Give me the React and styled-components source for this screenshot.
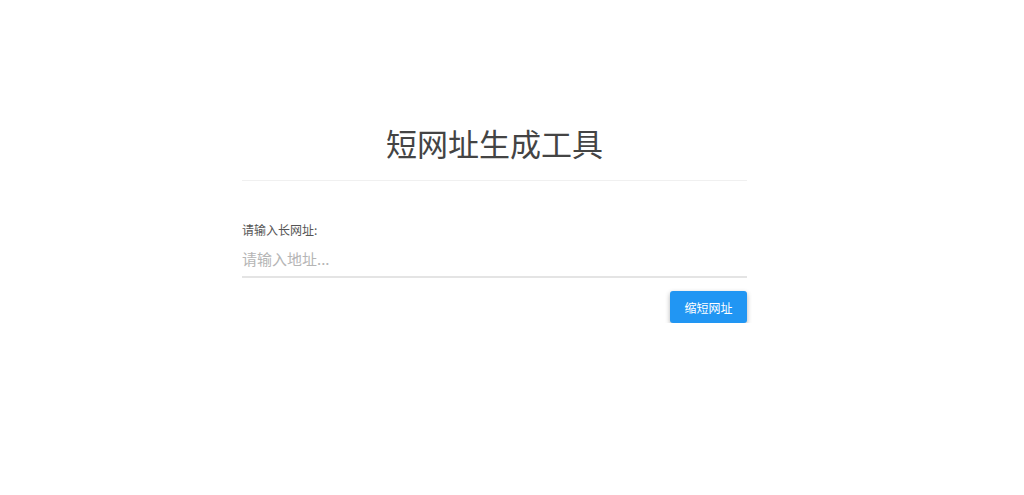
import React from "react";
import styled, { createGlobalStyle } from "styled-components";

const GlobalStyle = createGlobalStyle`
  body {
    margin: 0;
    background: #fff;
    font-family: "Noto Sans CJK SC", "Liberation Sans", sans-serif;
  }
`;

const Page = styled.div`
  padding: 118px 0 0 242px;
`;

const Container = styled.div`
  width: 505px;
`;

const Header = styled.header`
  border-bottom: 1px solid #f0f0f0;
  padding-bottom: 12px;
  margin-bottom: 40px;
`;

const Title = styled.h1`
  margin: 0;
  text-align: center;
  font-size: 31px;
  line-height: 50px;
  font-weight: 400;
  color: #444;
`;

const Form = styled.form`
  display: flex;
  flex-direction: column;
`;

const Label = styled.label`
  font-size: 12px;
  line-height: 18px;
  color: #555;
  margin-bottom: 7px;
`;

const Input = styled.input`
  border: none;
  border-bottom: 2px solid #e4e4e4;
  outline: none;
  padding: 0 0 6px;
  height: 24px;
  font-family: inherit;
  font-size: 15px;
  color: #333;
  &::placeholder {
    color: #b5b5b5;
  }
`;

const Actions = styled.div`
  display: flex;
  justify-content: flex-end;
  margin-top: 13px;
`;

const Button = styled.button`
  width: 77px;
  height: 32px;
  border: none;
  border-radius: 3px;
  background: #2196f3;
  color: #fff;
  font-family: inherit;
  font-size: 12px;
  cursor: pointer;
  box-shadow: 0 2px 5px rgba(0, 0, 0, 0.3);
`;

const App = () => {
  return (
    <>
      <GlobalStyle />
      <Page>
        <Container>
          <Header>
            <Title>短网址生成工具</Title>
          </Header>
          <Form onSubmit={(e) => e.preventDefault()}>
            <Label htmlFor="url">请输入长网址:</Label>
            <Input id="url" placeholder="请输入地址..." />
            <Actions>
              <Button type="submit">缩短网址</Button>
            </Actions>
          </Form>
        </Container>
      </Page>
    </>
  );
};

export default App;
